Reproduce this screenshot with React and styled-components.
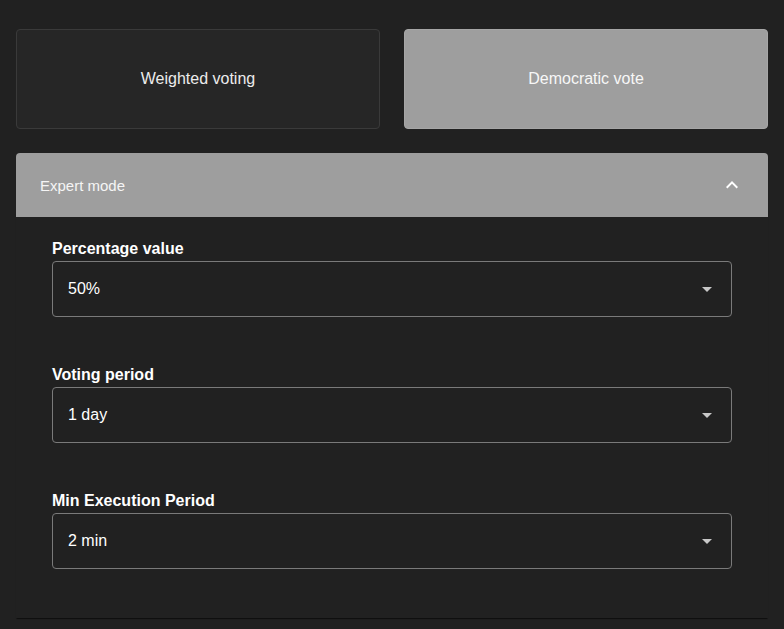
import React, { useState } from 'react'
import styled, { createGlobalStyle } from 'styled-components'

const GlobalStyle = createGlobalStyle`
    body {
        margin: 0;
        background: #212121;
        font-family: 'Liberation Sans', Arial, sans-serif;
        color: #fff;
    }
`

const fields = [
    { label: 'Percentage value', value: '50%' },
    { label: 'Voting period', value: '1 day' },
    { label: 'Min Execution Period', value: '2 min' },
]

const App = () => {
    const [mode, setMode] = useState('democratic')
    const [open, setOpen] = useState(true)
    return (
        <>
            <GlobalStyle />
            <Page>
                <Choices>
                    <Choice active={mode === 'weighted'} onClick={() => setMode('weighted')}>
                        Weighted voting
                    </Choice>
                    <Choice active={mode === 'democratic'} onClick={() => setMode('democratic')}>
                        Democratic vote
                    </Choice>
                </Choices>
                <Accordion>
                    <AccordionHeader onClick={() => setOpen(!open)}>
                        <span>Expert mode</span>
                        <Chevron open={open} viewBox="0 0 24 24">
                            <path d="M7.41 15.41 12 10.83l4.59 4.58L18 14l-6-6-6 6z" />
                        </Chevron>
                    </AccordionHeader>
                    {open && (
                        <AccordionBody>
                            {fields.map(f => (
                                <Field key={f.label}>
                                    <Label>{f.label}</Label>
                                    <Select>
                                        <span>{f.value}</span>
                                        <Arrow viewBox="0 0 24 24">
                                            <path d="M7 10l5 5 5-5z" />
                                        </Arrow>
                                    </Select>
                                </Field>
                            ))}
                        </AccordionBody>
                    )}
                </Accordion>
            </Page>
        </>
    )
}

export default App

const Page = styled.div`
    padding: 29px 16px 12px;
`
const Choices = styled.div`
    display: grid;
    grid-template-columns: 1fr 1fr;
    gap: 24px;
`
const Choice = styled.div`
    height: 100px;
    box-sizing: border-box;
    display: flex;
    align-items: center;
    justify-content: center;
    border-radius: 4px;
    border: 1px solid ${p => (p.active ? '#a6a6a6' : '#3a3a3a')};
    background: ${p => (p.active ? '#9e9e9e' : '#262626')};
    color: ${p => (p.active ? '#f7f7f7' : '#ececec')};
    font-size: 16px;
    cursor: pointer;
`
const Accordion = styled.div`
    margin-top: 24px;
    border-radius: 4px 4px 0 0;
    background: #212121;
    box-shadow: 0 2px 1px -1px rgba(0, 0, 0, 0.4), 0 1px 1px 0 rgba(0, 0, 0, 0.3);
`
const AccordionHeader = styled.div`
    height: 64px;
    display: flex;
    align-items: center;
    justify-content: space-between;
    padding: 0 24px;
    background: #9e9e9e;
    border-radius: 4px 4px 0 0;
    font-size: 15px;
    color: #f5f5f5;
    cursor: pointer;
`
const Chevron = styled.svg`
    width: 24px;
    height: 24px;
    fill: #fff;
    transform: rotate(${p => (p.open ? '0deg' : '180deg')});
`
const AccordionBody = styled.div`
    display: flex;
    flex-direction: column;
    gap: 49px;
    padding: 23px 36px 49px;
`
const Field = styled.div`
    display: flex;
    flex-direction: column;
    gap: 4px;
`
const Label = styled.div`
    font-size: 16px;
    font-weight: bold;
    line-height: 17px;
    color: #fff;
`
const Select = styled.div`
    height: 56px;
    box-sizing: border-box;
    border: 1px solid #7a7a7a;
    border-radius: 4px;
    display: flex;
    align-items: center;
    justify-content: space-between;
    padding: 0 12px 0 15px;
    font-size: 16px;
    color: #fff;
`
const Arrow = styled.svg`
    width: 24px;
    height: 24px;
    fill: #c8c8c8;
`
